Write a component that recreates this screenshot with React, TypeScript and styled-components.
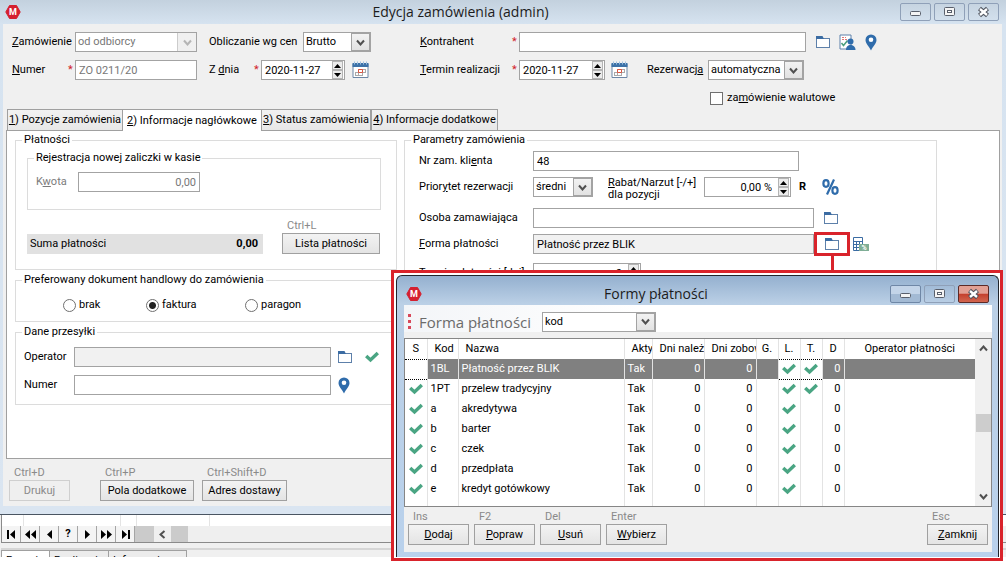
import React, { ReactNode, useState } from "react";
import styled, { createGlobalStyle, css } from "styled-components";

const GlobalStyle = createGlobalStyle`
  *, *::before, *::after { box-sizing: border-box; }
  body {
    margin: 0;
    background: #fff;
    color: #000;
    font: 11px/14px Roboto, "Liberation Sans", sans-serif;
  }
  button, input, select { font: inherit; color: inherit; margin: 0; border-radius: 0; }
`;

/* ---------- windows ---------- */

const Desktop = styled.div`
  position: relative;
  padding-bottom: 8px;
`;

const MainWindow = styled.main`
  padding: 0 4px 8px 3px;
  border-bottom: 1px solid #4a5562;
  background: linear-gradient(#c3d1de 0, #d6e3f0 24px, #dae5f1 100%);
`;

const TitleBar = styled.header<{ $dialog?: boolean }>`
  display: flex;
  align-items: center;
  height: ${(p) => (p.$dialog ? 29 : 24)}px;
  padding: ${(p) => (p.$dialog ? "6px 3px 0 2px" : "0 3px 0 2px")};
`;

const TitleText = styled.h1`
  flex: 1;
  margin: 0;
  text-align: center;
  font: 400 14px/20px "Open Sans", "Noto Sans", sans-serif;
  color: #1c1c1c;
`;

const WindowButtons = styled.div`
  display: flex;
  gap: 3px;
`;

const WindowButton = styled.button<{ $tone?: "active" | "close" }>`
  display: grid;
  place-items: center;
  width: 31px;
  height: 18px;
  padding: 0;
  border: 1px solid #8fa0b8;
  border-radius: 2px;
  background: transparent;
  ${(p) =>
    p.$tone === "active" &&
    css`
      border-color: #6f87a6;
      background: linear-gradient(#c3d4e8 0 48%, #a3bad4 52% 100%);
    `}
  ${(p) =>
    p.$tone === "close" &&
    css`
      border-color: #5c2a26;
      background: linear-gradient(#e2a094 0 45%, #c4412e 52%, #d2664f 100%);
    `}
`;

const Client = styled.div`
  background: #f0f0f0;
`;

/* ---------- form parts ---------- */

const HeaderForm = styled.form`
  display: flex;
  padding: 8px 0 0 9px;
  height: 85px;
`;

const HeaderColumn = styled.div<{ $grow?: boolean }>`
  display: flex;
  flex-direction: column;
  gap: 8px;
  ${(p) => (p.$grow ? "flex: 1; padding-right: 125px;" : "flex: 0 0 408px;")}
`;

const Row = styled.div<{ $indent?: number; $top?: boolean; $height?: number; $right?: number }>`
  display: flex;
  align-items: ${(p) => (p.$top ? "flex-start" : "center")};
  min-height: ${(p) => p.$height ?? 20}px;
  padding-left: ${(p) => p.$indent ?? 0}px;
  padding-right: ${(p) => p.$right ?? 0}px;
`;

const Label = styled.label<{ $w?: number; $muted?: boolean }>`
  display: flex;
  justify-content: space-between;
  flex: none;
  width: ${(p) => (p.$w ? p.$w + "px" : "auto")};
  color: ${(p) => (p.$muted ? "#7b7b7b" : "inherit")};
  white-space: nowrap;
`;

const Required = styled.span`
  width: 7px;
  color: #d0202a;
`;

const Gap = styled.span<{ $w: number }>`
  flex: 0 0 ${(p) => p.$w}px;
`;

const TextBox = styled.input<{ $w?: number; $filled?: boolean; $muted?: boolean; $right?: boolean }>`
  ${(p) => (p.$w ? `flex: 0 0 ${p.$w}px; width: ${p.$w}px;` : "flex: 1; width: 0;")}
  height: 20px;
  padding: 0 3px;
  border: 1px solid #a3a3a3;
  outline: none;
  background: ${(p) => (p.$filled ? "#f1f1f1" : "#fff")};
  color: ${(p) => (p.$muted ? "#777" : "#000")};
  text-align: ${(p) => (p.$right ? "right" : "left")};
`;

const SelectFrame = styled.span<{ $w: number; $muted?: boolean }>`
  display: grid;
  flex: 0 0 ${(p) => p.$w}px;
  height: 20px;
  border: 1px solid #a3a3a3;
  background: #fff;
  color: ${(p) => (p.$muted ? "#777" : "#000")};
  > * { grid-area: 1 / 1; }
`;

const NativeSelect = styled.select`
  appearance: none;
  width: 100%;
  height: 18px;
  padding: 0 20px 0 2px;
  border: 0;
  outline: none;
  background: none;
  opacity: 1;
`;

const SelectArrow = styled.span<{ $muted?: boolean }>`
  justify-self: end;
  display: grid;
  place-items: center;
  width: 19px;
  height: 18px;
  border: ${(p) => (p.$muted ? "0 solid #ccc" : "1px solid #a3a3a3")};
  border-left-width: 1px;
  background: ${(p) => (p.$muted ? "#f0f0f0" : "linear-gradient(#f2f2f2, #e2e2e2)")};
  color: ${(p) => (p.$muted ? "#b5b5b5" : "#505050")};
  pointer-events: none;
`;

const SpinFrame = styled.span<{ $w: number }>`
  display: flex;
  align-items: center;
  flex: 0 0 ${(p) => p.$w}px;
  height: 20px;
  padding-right: 1px;
  border: 1px solid #a3a3a3;
  background: #fff;
`;

const SpinInput = styled.input<{ $right?: boolean }>`
  flex: 1;
  width: 0;
  height: 18px;
  padding: 0 ${(p) => (p.$right ? 6 : 3)}px;
  border: 0;
  outline: none;
  background: none;
  text-align: ${(p) => (p.$right ? "right" : "left")};
`;

const SpinButtons = styled.span`
  display: flex;
  flex-direction: column;
`;

const SpinButton = styled.button`
  display: grid;
  place-items: center;
  width: 11px;
  height: 9px;
  padding: 0;
  border: 1px solid #b4b4b4;
  background: #ececec;
`;

const IconButton = styled.button<{ $ml?: number }>`
  display: grid;
  place-items: center;
  flex: none;
  margin-left: ${(p) => p.$ml ?? 0}px;
  padding: 0;
  border: 0;
  background: none;
`;

const HighlightedButton = styled.button`
  position: relative;
  display: grid;
  place-items: center;
  flex: none;
  width: 36px;
  height: 24px;
  margin: -2px 0;
  padding: 0;
  border: 3px solid #d9232b;
  background: none;
  &::after {
    content: "";
    position: absolute;
    top: 21px;
    left: 14px;
    width: 3px;
    height: 16px;
    background: #d9232b;
  }
`;

const PushButton = styled.button<{ $w: number }>`
  width: ${(p) => p.$w}px;
  height: 21px;
  padding: 0;
  border: 1px solid #a0a0a0;
  background: linear-gradient(#f3f3f3, #e4e4e4);
  white-space: nowrap;
  &:disabled {
    border-color: #cfcfcf;
    background: #efefef;
    color: #8a8a8a;
  }
`;

const Action = styled.div<{ $ml?: number }>`
  display: flex;
  flex-direction: column;
  margin-left: ${(p) => p.$ml ?? 0}px;
`;

const Shortcut = styled.span`
  padding-left: 5px;
  line-height: 14px;
  color: #8a8a8a;
`;

const CheckBox = styled.input`
  appearance: none;
  width: 13px;
  height: 13px;
  border: 1px solid #707070;
  background: #fff;
`;

const Radio = styled.input`
  appearance: none;
  width: 13px;
  height: 13px;
  border: 1px solid #707070;
  border-radius: 50%;
  background: #fff;
  &:checked { background: radial-gradient(circle, #222 0 3px, #fff 4px); }
`;

const ChoiceLabel = styled.label<{ $w?: number; $gap?: number }>`
  display: flex;
  align-items: center;
  gap: ${(p) => p.$gap ?? 3}px;
  width: ${(p) => (p.$w ? p.$w + "px" : "auto")};
`;

/* ---------- tabs and panel ---------- */

const Tabs = styled.div`
  display: flex;
  align-items: stretch;
  padding-left: 4px;
  height: 21px;
`;

const Tab = styled.button<{ $active?: boolean; $w: number }>`
  position: relative;
  width: ${(p) => p.$w}px;
  padding: 0;
  border: 1px solid #a0a0a0;
  border-left-width: ${(p) => (p.$active ? 0 : 1)}px;
  border-bottom: 0;
  background: ${(p) => (p.$active ? "#fff" : "linear-gradient(#f2f2f2, #e8e8e8)")};
  margin-bottom: ${(p) => (p.$active ? -1 : 0)}px;
  margin-right: ${(p) => (p.$active ? -1 : 0)}px;
  white-space: nowrap;
`;

const Panel = styled.section`
  display: flex;
  gap: 7px;
  min-height: 329px;
  margin: 0 2px 0 3px;
  padding: 2px 0 0 8px;
  border: 1px solid #a0a0a0;
  background: #fff;
`;

const LeftColumn = styled.div`
  display: flex;
  flex-direction: column;
  gap: 3px;
  flex: 0 0 382px;
`;

const Group = styled.fieldset<{ $grow?: boolean }>`
  min-width: 0;
  margin: 0;
  padding: 0;
  border: 1px solid #dcdcdc;
  ${(p) => p.$grow && "flex: 1; align-self: flex-start; margin-right: 62px; height: 300px;"}
`;

const Legend = styled.legend`
  margin-left: 6px;
  padding: 0 2px;
`;

const GroupBody = styled.div<{ $pad: string; $gap?: number }>`
  display: flex;
  flex-direction: column;
  gap: ${(p) => p.$gap ?? 0}px;
  padding: ${(p) => p.$pad};
`;

const SumRow = styled.div`
  display: flex;
  align-items: flex-end;
  justify-content: space-between;
  margin-top: 9px;
  padding-right: 1px;
`;

const SumBar = styled.div`
  display: flex;
  align-items: center;
  justify-content: space-between;
  width: 236px;
  height: 20px;
  padding: 0 5px 0 3px;
  background: #e1e1e1;
`;

const TwoLine = styled.label`
  flex: 0 0 96px;
  min-width: 0;
  line-height: 12px;
  white-space: nowrap;
`;

const FormFooter = styled.footer`
  display: flex;
  height: 47px;
  padding: 7px 0 0 6px;
`;

/* ---------- list window behind ---------- */

const ListWindow = styled.section`
  height: 42px;
  padding-left: 1px;
  overflow: hidden;
  background: #f0f0f0;
`;

const ListCells = styled.div`
  display: flex;
  height: 11px;
  border-left: 1px solid #8a8a8a;
  background: #fff;
`;

const ListCell = styled.span<{ $w: number }>`
  width: ${(p) => p.$w}px;
  border-right: 1px solid #e4e4e4;
`;

const Navigator = styled.nav`
  display: flex;
  height: 17px;
  border-left: 1px solid #8a8a8a;
  border-bottom: 1px solid #8a8a8a;
  background: #efefef;
`;

const NavButton = styled.button`
  display: grid;
  place-items: center;
  width: 19px;
  padding: 0;
  border: 0;
  border-right: 1px solid #a5a5a5;
  background: #f4f4f4;
  font-weight: 700;
`;

const NavFill = styled.span<{ $w: number; $thumb?: boolean }>`
  display: grid;
  place-items: center;
  width: ${(p) => p.$w}px;
  background: ${(p) => (p.$thumb ? "#cbcbcb" : "transparent")};
`;

const ListTabs = styled.div`
  display: flex;
  height: 14px;
  margin-top: 5px;
  border-top: 2px solid #d6d6d6;
  overflow: hidden;
`;

const ListTab = styled.button<{ $w: number; $active?: boolean }>`
  width: ${(p) => p.$w}px;
  height: 22px;
  padding: 3px 4px;
  border: 1px solid #a0a0a0;
  border-right-width: 0;
  background: ${(p) => (p.$active ? "#fff" : "#ececec")};
  text-align: left;
  line-height: 14px;
  &:last-child { border-right-width: 1px; }
`;

/* ---------- dialog ---------- */

const DialogFrame = styled.div`
  position: absolute;
  top: 270px;
  left: 391px;
  right: 3px;
  padding: 2px 1px 1px 2px;
  border: 3px solid #d9232b;
  background: #fff;
`;

const DialogWindow = styled.section`
  padding: 0 6px 5px 7px;
  border: 1px solid #20252c;
  border-bottom: 0;
  border-radius: 6px 6px 0 0;
  background: linear-gradient(#94b0cf 0, #bbd0e6 28px, #b9d1ec 100%);
`;

const DialogToolbar = styled.div`
  display: flex;
  align-items: center;
  height: 33px;
  padding: 6px 6px 0 4px;
  border-bottom: 6px solid #f0f0f0;
  background: linear-gradient(90deg, #f3f5f8, #fff 40%);
`;

const Grip = styled.span`
  width: 3px;
  height: 16px;
  margin-right: 8px;
  background: repeating-linear-gradient(#d8485a 0 3px, transparent 3px 6px);
`;

const ToolbarLabel = styled.label`
  width: 123px;
  font: 400 15px/20px "Open Sans", "Noto Sans", sans-serif;
  color: #6b6b6b;
`;

const GridFrame = styled.div`
  display: flex;
  border: 1px solid #868686;
  background: #fff;
`;

const Table = styled.table`
  flex: 1;
  table-layout: fixed;
  width: 0;
  border-collapse: collapse;
`;

const HeadCell = styled.th<{ $center?: boolean }>`
  height: 20px;
  padding: 0 0 0 ${(p) => (p.$center ? 0 : 7)}px;
  border-right: 1px solid #e3e3e3;
  font-weight: 400;
  text-align: ${(p) => (p.$center ? "center" : "left")};
  white-space: nowrap;
  overflow: hidden;
  &:last-child { border-right: 0; }
`;

const Cell = styled.td<{ $right?: boolean; $check?: boolean; $short?: boolean }>`
  height: ${(p) => (p.$short ? 7 : 20)}px;
  padding: 0 3px;
  border-right: 1px solid #e3e3e3;
  text-align: ${(p) => (p.$right ? "right" : "left")};
  white-space: nowrap;
  overflow: hidden;
  ${(p) => p.$check && "padding: 0; text-align: center;"}
  svg { display: block; margin: auto; }
  &:last-child { border-right: 0; }
`;

const BodyRow = styled.tr<{ $selected?: boolean }>`
  ${(p) =>
    p.$selected &&
    css`
      background: #808080;
      color: #fff;
      ${Cell}[data-focus] {
        background: #fff;
        border-top: 1px dotted #000;
        border-bottom: 1px dotted #000;
      }
    `}
`;

const ScrollBar = styled.div`
  display: flex;
  flex-direction: column;
  align-items: center;
  justify-content: space-between;
  width: 16px;
  padding: 6px 0;
  background: #f0f0f0;
  color: #505050;
`;

const ScrollThumb = styled.span`
  width: 15px;
  height: 18px;
  margin-top: 62px;
  margin-bottom: auto;
  background: #cdcdcd;
`;

const DialogFooter = styled.footer`
  display: flex;
  gap: 5px;
  height: 45px;
  padding: 3px 4px 0;
  background: #f0f0f0;
  ${Action}:last-child { margin-left: auto; }
`;

/* ---------- icons ---------- */

const AppIcon = () => (
  <svg width="16" height="16" viewBox="0 0 16 16" aria-hidden="true">
    <path d="M4.500 1.500h7l3.700 6.500-3.700 6.500h-7L.8 8z" fill="#d5202f" stroke="#d5202f" strokeLinejoin="round" />
    <text x="8" y="11" textAnchor="middle" fontFamily="Roboto, sans-serif" fontWeight="700" fontSize="9" fill="#fff">M</text>
  </svg>
);

const Chevron = ({ d = "M1 1.500l3.500 4L8 1.500" }: { d?: string }) => (
  <svg width="9" height="7" viewBox="0 0 9 7" fill="none" stroke="currentColor" strokeWidth="2" aria-hidden="true">
    <path d={d} />
  </svg>
);

const FolderIcon = () => (
  <svg width="14" height="13" viewBox="0 0 14 13" aria-hidden="true">
    <rect x=".5" y="2.500" width="13" height="9" fill="#fff" stroke="#5d80aa" />
    <path d="M0 0h6.500l1.500 3H0z" fill="#3b6ca3" />
  </svg>
);

const PinIcon = () => (
  <svg width="12" height="17" viewBox="0 0 12 17" aria-hidden="true">
    <path d="M6 .5A5.500 5.500 0 0 0 .5 6c0 3.600 3.500 6 5.500 10.500C8 12 11.500 9.600 11.500 6A5.500 5.500 0 0 0 6 .5z" fill="#2f6cab" />
    <circle cx="6" cy="5.800" r="2.300" fill="#fff" />
  </svg>
);

const ContractorIcon = () => (
  <svg width="17" height="17" viewBox="0 0 17 17" aria-hidden="true">
    <path d="M1 1h11v14H1z" fill="#fff" stroke="#5d80aa" />
    <path d="M3 3.500h4M3 5.500h6" stroke="#d77" strokeDasharray="2 1" />
    <path d="M2.500 9l2 2.500 4-5" fill="none" stroke="#4a9f7c" strokeWidth="1.500" />
    <circle cx="11.500" cy="7.500" r="3" fill="#2f6cab" />
    <path d="M7 16c0-3.500 2-5 4.500-5s5 1.500 5 5z" fill="#2f6cab" />
  </svg>
);

const CalendarIcon = () => (
  <svg width="17" height="18" viewBox="0 0 17 18" aria-hidden="true">
    <path d="M1 3h15v13.500H1z" fill="#fff" stroke="#6d87a6" />
    <path d="M.5 2h16v4H.5z" fill="#3d72a8" />
    <path d="M2.500.5v3M5.500.5v3M8.500.5v3M11.500.5v3M14.500.5v3" stroke="#9fc0df" />
    <path d="M6 8.500h8M3 11.500h11M3 14.500h8M3.500 11v4M6.500 8v7M10.500 8v7M13.500 8v4" stroke="#a9a9a9" />
    <path d="M6.500 8.500h4v3h-4z" fill="none" stroke="#dc5540" />
  </svg>
);

const PercentIcon = () => (
  <svg width="17" height="16" viewBox="0 0 17 16" fill="none" stroke="#2f6cab" strokeWidth="2.200" aria-hidden="true">
    <ellipse cx="4" cy="4.500" rx="2.600" ry="3.300" />
    <ellipse cx="13" cy="11.500" rx="2.600" ry="3.300" />
    <path d="M12 .5l-7 15" />
  </svg>
);

const CalculatorIcon = () => (
  <svg width="16" height="15" viewBox="0 0 16 15" aria-hidden="true">
    <path d="M.5.5h9v13h-9z" fill="#fff" stroke="#3b6ca3" />
    <path d="M1 4.500h9M1 7.500h9M1 10.500h9M3.500 5v8M6.500 5v8" stroke="#3b6ca3" />
    <rect x="6" y="7" width="10" height="7" fill="#7fae96" />
    <text x="11" y="13" textAnchor="middle" fontFamily="Roboto, sans-serif" fontWeight="700" fontSize="7" fill="#fff">%</text>
  </svg>
);

const CheckIcon = () => (
  <svg width="14" height="12" viewBox="0 0 14 12" fill="none" stroke="#4aa583" strokeWidth="3.400" aria-hidden="true">
    <path d="M1.200 5l4.300 4L12.800 2" />
  </svg>
);

const MinimizeIcon = () => (
  <svg width="12" height="12" viewBox="0 0 12 12" aria-hidden="true">
    <rect x=".5" y="5.500" width="10" height="4" rx="1" fill="#f4f4f4" stroke="#595f6b" />
  </svg>
);

const MaximizeIcon = () => (
  <svg width="12" height="12" viewBox="0 0 12 12" aria-hidden="true">
    <rect x=".5" y="1.500" width="10" height="8" rx="1" fill="#f4f4f4" stroke="#595f6b" />
    <rect x="3.500" y="4.500" width="4" height="2" fill="#fff" stroke="#595f6b" />
  </svg>
);

const CloseIcon = () => (
  <svg width="13" height="12" viewBox="0 0 13 12" fill="none" aria-hidden="true">
    <path d="M2.500 2.500l8 7M10.500 2.500l-8 7" stroke="#4d525c" strokeWidth="4.500" />
    <path d="M3 3l7 6M10 3L3 9" stroke="#fff" strokeWidth="2.400" />
  </svg>
);

const NavIcon = ({ d }: { d: string }) => (
  <svg width="13" height="9" viewBox="0 0 13 9" aria-hidden="true">
    <path d={d} />
  </svg>
);

/* ---------- composed controls ---------- */

const Select = ({ id, w, value, muted }: { id: string; w: number; value: string; muted?: boolean }) => (
  <SelectFrame $w={w} $muted={muted}>
    <NativeSelect id={id} defaultValue={value} disabled={muted}>
      <option>{value}</option>
    </NativeSelect>
    <SelectArrow $muted={muted}>
      <Chevron />
    </SelectArrow>
  </SelectFrame>
);

const Spin = ({ id, w, value, right }: { id: string; w: number; value: string; right?: boolean }) => (
  <SpinFrame $w={w}>
    <SpinInput id={id} defaultValue={value} $right={right} />
    <SpinButtons>
      <SpinButton type="button" aria-label="Zwiększ">
        <svg width="7" height="4"><path d="M3.500 0L7 4H0z" /></svg>
      </SpinButton>
      <SpinButton type="button" aria-label="Zmniejsz">
        <svg width="7" height="4"><path d="M3.500 4L7 0H0z" /></svg>
      </SpinButton>
    </SpinButtons>
  </SpinFrame>
);

const WindowControls = ({ dialog }: { dialog?: boolean }) => (
  <WindowButtons>
    <WindowButton $tone={dialog ? "active" : undefined} aria-label="Minimalizuj"><MinimizeIcon /></WindowButton>
    <WindowButton aria-label="Maksymalizuj"><MaximizeIcon /></WindowButton>
    <WindowButton $tone={dialog ? "close" : undefined} aria-label="Zamknij okno"><CloseIcon /></WindowButton>
  </WindowButtons>
);

const ShortcutButton = ({ hint, w, ml, disabled, children }: {
  hint: string; w: number; ml?: number; disabled?: boolean; children: ReactNode;
}) => (
  <Action $ml={ml}>
    <Shortcut>{hint}</Shortcut>
    <PushButton type="button" $w={w} disabled={disabled}>{children}</PushButton>
  </Action>
);

/* ---------- data ---------- */

const forms = [
  { s: false, code: "1BL", name: "Płatność przez BLIK", t: true },
  { s: true, code: "1PT", name: "przelew tradycyjny", t: true },
  { s: true, code: "a", name: "akredytywa", t: false },
  { s: true, code: "b", name: "barter", t: false },
  { s: true, code: "c", name: "czek", t: false },
  { s: true, code: "d", name: "przedpłata", t: false },
  { s: true, code: "e", name: "kredyt gotówkowy", t: false },
];

const columns: { title: string; w?: number; center?: boolean }[] = [
  { title: "S", w: 22, center: true },
  { title: "Kod", w: 31 },
  { title: "Nazwa", w: 166 },
  { title: "Akty", w: 28 },
  { title: "Dni należ", w: 52 },
  { title: "Dni zobow", w: 52 },
  { title: "G.", w: 22, center: true },
  { title: "L.", w: 22, center: true },
  { title: "T.", w: 22, center: true },
  { title: "D", w: 22, center: true },
  { title: "Operator płatności", center: true },
];

const navIcons = [
  "M2 0h2v9H2zM10 0v9L5 4.500z",
  "M6 0v9L1 4.500zM12 0v9L7 4.500z",
  "M9 0v9L4 4.500z",
  "?",
  "M4 0v9l5-4.500z",
  "M1 0v9l5-4.500zM7 0v9l5-4.500z",
  "M3 0v9l5-4.500zM9 0h2v9H9z",
];

const PaymentFormsDialog = () => (
  <DialogFrame>
    <DialogWindow role="dialog" aria-label="Formy płatności">
      <TitleBar $dialog>
        <AppIcon />
        <TitleText as="h2">Formy płatności</TitleText>
        <WindowControls dialog />
      </TitleBar>
      <DialogToolbar>
        <Grip />
        <ToolbarLabel htmlFor="sort">Forma płatności</ToolbarLabel>
        <Select id="sort" w={114} value="kod" />
      </DialogToolbar>
      <GridFrame>
        <Table>
          <colgroup>
            {columns.map((c) => <col key={c.title} width={c.w} />)}
          </colgroup>
          <thead>
            <tr>
              {columns.map((c) => <HeadCell key={c.title} $center={c.center}>{c.title}</HeadCell>)}
            </tr>
          </thead>
          <tbody>
            {forms.map((f, i) => (
              <BodyRow key={f.code} $selected={i === 0}>
                <Cell $check data-focus>{f.s && <CheckIcon />}</Cell>
                <Cell>{f.code}</Cell>
                <Cell>{f.name}</Cell>
                <Cell>Tak</Cell>
                <Cell $right>0</Cell>
                <Cell $right>0</Cell>
                <Cell />
                <Cell $check data-focus><CheckIcon /></Cell>
                <Cell $check data-focus>{f.t && <CheckIcon />}</Cell>
                <Cell $right>0</Cell>
                <Cell />
              </BodyRow>
            ))}
            <tr>{columns.map((c) => <Cell key={c.title} $short />)}</tr>
          </tbody>
        </Table>
        <ScrollBar>
          <Chevron d="M1 5.500l3.500-4L8 5.500" />
          <ScrollThumb />
          <Chevron />
        </ScrollBar>
      </GridFrame>
      <DialogFooter>
        <ShortcutButton hint="Ins" w={61}><u>D</u>odaj</ShortcutButton>
        <ShortcutButton hint="F2" w={61}><u>P</u>opraw</ShortcutButton>
        <ShortcutButton hint="Del" w={61}><u>U</u>suń</ShortcutButton>
        <ShortcutButton hint="Enter" w={61}><u>W</u>ybierz</ShortcutButton>
        <ShortcutButton hint="Esc" w={61}><u>Z</u>amknij</ShortcutButton>
      </DialogFooter>
    </DialogWindow>
  </DialogFrame>
);

export default function App() {
  const [document, setDocument] = useState("faktura");
  return (
    <Desktop>
      <GlobalStyle />
      <MainWindow>
        <TitleBar>
          <AppIcon />
          <TitleText>Edycja zamówienia (admin)</TitleText>
          <WindowControls />
        </TitleBar>
        <Client>
          <HeaderForm>
            <HeaderColumn>
              <Row>
                <Label htmlFor="order" $w={63}><span><u>Z</u>amówienie</span></Label>
                <Select id="order" w={122} value="od odbiorcy" muted />
                <Gap $w={12} />
                <Label htmlFor="calc" $w={94}>Obliczanie wg cen</Label>
                <Select id="calc" w={68} value="Brutto" />
              </Row>
              <Row>
                <Label htmlFor="number" $w={63}><span><u>N</u>umer</span><Required>*</Required></Label>
                <TextBox id="number" $w={122} $muted defaultValue="ZO 0211/20" />
                <Gap $w={12} />
                <Label htmlFor="date" $w={52}><span>Z <u>d</u>nia</span><Required>*</Required></Label>
                <Spin id="date" w={84} value="2020-11-27" />
                <IconButton type="button" $ml={7} aria-label="Kalendarz"><CalendarIcon /></IconButton>
              </Row>
            </HeaderColumn>
            <HeaderColumn $grow>
              <Row>
                <Label htmlFor="client" $w={99}><span><u>K</u>ontrahent</span><Required>*</Required></Label>
                <TextBox id="client" />
                <IconButton type="button" $ml={10} aria-label="Wybierz"><FolderIcon /></IconButton>
                <IconButton type="button" $ml={9} aria-label="Dane kontrahenta"><ContractorIcon /></IconButton>
                <IconButton type="button" $ml={9} aria-label="Adres"><PinIcon /></IconButton>
              </Row>
              <Row>
                <Label htmlFor="due" $w={99}><span><u>T</u>ermin realizacji</span><Required>*</Required></Label>
                <Spin id="due" w={86} value="2020-11-27" />
                <IconButton type="button" $ml={6} aria-label="Kalendarz"><CalendarIcon /></IconButton>
                <Gap $w={19} />
                <Label htmlFor="reservation" $w={61}><span>Rezerwacj<u>a</u></span></Label>
                <Select id="reservation" w={96} value="automatyczna" />
              </Row>
              <Row $indent={290}>
                <ChoiceLabel $gap={4}>
                  <CheckBox type="checkbox" />
                  <span>za<u>m</u>ówienie walutowe</span>
                </ChoiceLabel>
              </Row>
            </HeaderColumn>
          </HeaderForm>

          <Tabs role="tablist">
            <Tab role="tab" $w={116}><u>1</u>) Pozycje zamówienia</Tab>
            <Tab role="tab" $w={139} $active aria-selected><u>2</u>) Informacje nagłówkowe</Tab>
            <Tab role="tab" $w={110}><u>3</u>) Status zamówienia</Tab>
            <Tab role="tab" $w={127}><u>4</u>) Informacje dodatkowe</Tab>
          </Tabs>

          <Panel>
            <LeftColumn>
              <Group>
                <Legend>Płatności</Legend>
                <GroupBody $pad="4px 15px 15px 11px">
                  <Group>
                    <Legend>Rejestracja nowej zaliczki w kasie</Legend>
                    <GroupBody $pad="7px 0 17px 8px">
                      <Row>
                        <Label htmlFor="amount" $w={42} $muted><span>K<u>w</u>ota</span></Label>
                        <TextBox id="amount" $w={122} $muted $right defaultValue="0,00" />
                      </Row>
                    </GroupBody>
                  </Group>
                  <SumRow>
                    <SumBar>
                      <span>Suma płatności</span>
                      <b>0,00</b>
                    </SumBar>
                    <ShortcutButton hint="Ctrl+L" w={98}>Lista płatności</ShortcutButton>
                  </SumRow>
                </GroupBody>
              </Group>
              <Group>
                <Legend>Preferowany dokument handlowy do zamówienia</Legend>
                <GroupBody $pad="11px 0 9px 47px">
                  <Row $height={14}>
                    {([["brak", 83], ["faktura", 99], ["paragon", 70]] as [string, number][]).map(([name, w]) => (
                      <ChoiceLabel key={name} $w={w}>
                        <Radio
                          type="radio"
                          name="document"
                          checked={document === name}
                          onChange={() => setDocument(name)}
                        />
                        {name}
                      </ChoiceLabel>
                    ))}
                  </Row>
                </GroupBody>
              </Group>
              <Group>
                <Legend>Dane przesyłki</Legend>
                <GroupBody $pad="8px 16px 9px 8px" $gap={8}>
                  <Row>
                    <Label htmlFor="operator" $w={50}>Operator</Label>
                    <TextBox id="operator" $w={257} $filled />
                    <IconButton type="button" $ml={7} aria-label="Wybierz operatora"><FolderIcon /></IconButton>
                    <IconButton type="button" $ml={13} aria-label="Zatwierdź"><CheckIcon /></IconButton>
                  </Row>
                  <Row>
                    <Label htmlFor="parcel" $w={50}>Numer</Label>
                    <TextBox id="parcel" $w={257} />
                    <IconButton type="button" $ml={7} aria-label="Śledź przesyłkę"><PinIcon /></IconButton>
                  </Row>
                </GroupBody>
              </Group>
            </LeftColumn>

            <Group $grow>
              <Legend>Parametry zamówienia</Legend>
              <GroupBody $pad="4px 0 0 14px" $gap={6}>
                <Row $right={137}>
                  <Label htmlFor="client-no" $w={114}><span>Nr zam. kli<u>e</u>nta</span></Label>
                  <TextBox id="client-no" defaultValue="48" />
                </Row>
                <Row $top $height={25}>
                  <Row>
                    <Label htmlFor="priority" $w={114}><span>Prior<u>y</u>tet rezerwacji</span></Label>
                    <Select id="priority" w={60} value="średni" />
                  </Row>
                  <Gap $w={15} />
                  <TwoLine htmlFor="discount"><u>R</u>abat/Narzut [-/+]<br />dla pozycji</TwoLine>
                  <Row>
                    <Spin id="discount" w={87} value="0,00 %" right />
                    <Gap $w={8} />
                    <b>R</b>
                    <IconButton type="button" $ml={16} aria-label="Procent"><PercentIcon /></IconButton>
                  </Row>
                </Row>
                <Row $right={98}>
                  <Label htmlFor="person" $w={114}>Osoba zamawiająca</Label>
                  <TextBox id="person" />
                  <IconButton type="button" $ml={10} aria-label="Wybierz osobę"><FolderIcon /></IconButton>
                </Row>
                <Row $right={67}>
                  <Label htmlFor="payment" $w={114}><span><u>F</u>orma płatności</span></Label>
                  <TextBox id="payment" $filled defaultValue="Płatność przez BLIK" />
                  <HighlightedButton type="button" aria-label="Wybierz formę płatności"><FolderIcon /></HighlightedButton>
                  <IconButton type="button" $ml={3} aria-label="Kalkulator"><CalculatorIcon /></IconButton>
                </Row>
                <Row $height={26}>
                  <Label htmlFor="term" $w={114}>Termin płatności [dni]</Label>
                  <Spin id="term" w={108} value="0" right />
                </Row>
              </GroupBody>
            </Group>
          </Panel>

          <FormFooter>
            <ShortcutButton hint="Ctrl+D" w={61} disabled>Drukuj</ShortcutButton>
            <ShortcutButton hint="Ctrl+P" w={94} ml={30}>Pola dodatkowe</ShortcutButton>
            <ShortcutButton hint="Ctrl+Shift+D" w={85} ml={8}>Adres dostawy</ShortcutButton>
          </FormFooter>
        </Client>
      </MainWindow>

      <ListWindow>
        <ListCells>
          <ListCell $w={22} />
          <ListCell $w={97} />
          <ListCell $w={16} />
          <ListCell $w={73} />
        </ListCells>
        <Navigator>
          {navIcons.map((d) => (
            <NavButton key={d} aria-label="Nawigacja">{d === "?" ? "?" : <NavIcon d={d} />}</NavButton>
          ))}
          <NavFill $w={19} $thumb />
          <NavFill $w={17}>
            <svg width="7" height="9" fill="none" stroke="#505050" strokeWidth="2"><path d="M5.500 1l-4 3.500 4 3.500" /></svg>
          </NavFill>
          <NavFill $w={17} $thumb />
        </Navigator>
        <ListTabs>
          <ListTab $w={48} $active>Pozycje</ListTab>
          <ListTab $w={59}>Realizacja</ListTab>
          <ListTab $w={79}>Informacje</ListTab>
        </ListTabs>
      </ListWindow>

      <PaymentFormsDialog />
    </Desktop>
  );
}
